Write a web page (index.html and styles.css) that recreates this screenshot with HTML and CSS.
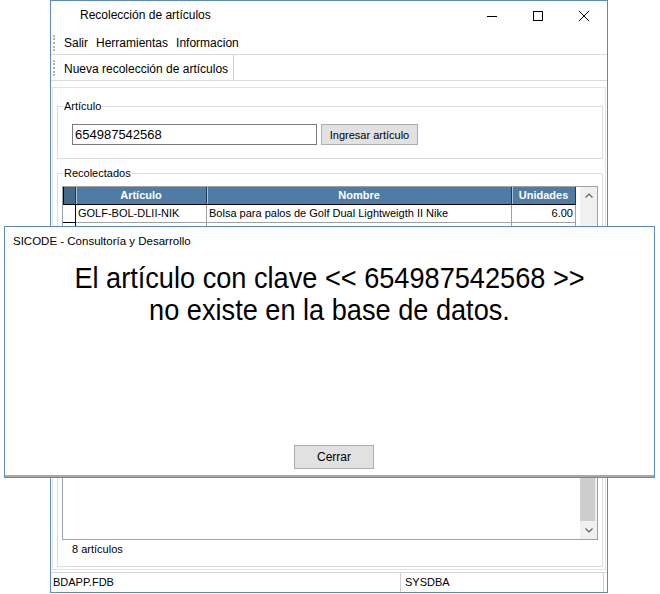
FILE: index.html
```html
<!DOCTYPE html>
<html lang="es">
<head>
    <meta charset="UTF-8">
    <title>Recolección de artículos</title>
    <link rel="stylesheet" href="styles.css">
</head>
<body>
    <div class="window">
        <div class="titlebar">
            <span class="title">Recolección de artículos</span>
            <div class="controls">
                <span class="ctl"><svg width="10" height="10" viewBox="0 0 10 10"><path d="M0 5.5h10" stroke="#000" stroke-width="1"/></svg></span>
                <span class="ctl"><svg width="10" height="10" viewBox="0 0 10 10"><rect x="0.5" y="0.5" width="9" height="9" fill="none" stroke="#000" stroke-width="1"/></svg></span>
                <span class="ctl"><svg width="10" height="10" viewBox="0 0 10 10"><path d="M0 0L10 10M10 0L0 10" stroke="#000" stroke-width="1"/></svg></span>
            </div>
        </div>

        <div class="menubar">
            <span class="grip"></span>
            <span class="menu-item">Salir</span>
            <span class="menu-item">Herramientas</span>
            <span class="menu-item">Informacion</span>
        </div>

        <div class="toolbar">
            <span class="grip"></span>
            <span class="tool-btn">Nueva recolección de artículos</span>
        </div>

        <div class="panel">
            <fieldset class="group">
                <legend>Artículo</legend>
                <div class="entry">
                    <input type="text" class="field" value="654987542568">
                    <button class="btn btn-add">Ingresar artículo</button>
                </div>
            </fieldset>

            <fieldset class="group group-list">
                <legend>Recolectados</legend>
                <div class="grid">
                    <div class="grid-body">
                        <div class="row head">
                            <div class="cell c-ind"></div>
                            <div class="cell c-art">Artículo</div>
                            <div class="cell c-nom">Nombre</div>
                            <div class="cell c-uni">Unidades</div>
                        </div>
                        <div class="row current">
                            <div class="cell c-ind"></div>
                            <div class="cell c-art">GOLF-BOL-DLII-NIK</div>
                            <div class="cell c-nom">Bolsa para palos de Golf Dual Lightweigth II Nike</div>
                            <div class="cell c-uni">6.00</div>
                        </div>
                        <div class="row"><div class="cell c-ind"></div><div class="cell c-art"></div><div class="cell c-nom"></div><div class="cell c-uni"></div></div>
                        <div class="row"><div class="cell c-ind"></div><div class="cell c-art"></div><div class="cell c-nom"></div><div class="cell c-uni"></div></div>
                        <div class="row"><div class="cell c-ind"></div><div class="cell c-art"></div><div class="cell c-nom"></div><div class="cell c-uni"></div></div>
                        <div class="row"><div class="cell c-ind"></div><div class="cell c-art"></div><div class="cell c-nom"></div><div class="cell c-uni"></div></div>
                        <div class="row"><div class="cell c-ind"></div><div class="cell c-art"></div><div class="cell c-nom"></div><div class="cell c-uni"></div></div>
                    </div>
                    <div class="vscroll">
                        <span class="sb-btn"><svg width="8" height="5" viewBox="0 0 8 5"><path d="M0.5 4.5L4 1L7.5 4.5" fill="none" stroke="#606060" stroke-width="1.2"/></svg></span>
                        <span class="sb-thumb"></span>
                        <span class="sb-btn"><svg width="8" height="5" viewBox="0 0 8 5"><path d="M0.5 0.5L4 4L7.5 0.5" fill="none" stroke="#606060" stroke-width="1.2"/></svg></span>
                    </div>
                </div>
                <div class="count">8 artículos</div>
            </fieldset>
        </div>

        <div class="statusbar">
            <span class="status-panel db">BDAPP.FDB</span>
            <span class="status-panel user">SYSDBA</span>
        </div>
    </div>

    <!-- mensaje modal encima del formulario -->
    <div class="dialog" role="dialog">
        <div class="dialog-title">SICODE - Consultoría y Desarrollo</div>
        <div class="dialog-msg">El artículo con clave &lt;&lt; 654987542568 &gt;&gt;<br>no existe en la base de datos.</div>
        <div class="dialog-actions">
            <button class="btn btn-close">Cerrar</button>
        </div>
    </div>
</body>
</html>
```

FILE: styles.css
```css
* {
    box-sizing: border-box;
}
body {
    margin: 0;
    width: 660px;
    height: 594px;
    overflow: hidden;
    position: relative;
    background-color: #ffffff;
    color: #000000;
    font-family: "Liberation Sans", Arial, sans-serif;
    font-size: 12px;
}
.window {
    margin-left: 50px;
    width: 558px;
    height: 593px;
    border: 1px solid #5d8bbd;
    display: flex;
    flex-direction: column;
}
.titlebar {
    height: 31px;
    display: flex;
    flex-shrink: 0;
}
.title {
    flex: 1;
    padding-left: 29px;
    line-height: 28px;
}
.controls {
    display: flex;
}
.ctl {
    width: 46px;
    height: 30px;
    display: flex;
    align-items: center;
    justify-content: center;
}
.menubar {
    height: 23px;
    flex-shrink: 0;
    display: flex;
    align-items: center;
    border-bottom: 1px solid #dadada;
}
.grip {
    width: 2px;
    height: 16px;
    margin: 0 5px 0 2px;
    border-left: 2px dotted #b4b4b4;
}
.menu-item {
    padding: 0 4px;
}
.toolbar {
    height: 26px;
    flex-shrink: 0;
    display: flex;
    align-items: stretch;
    border-bottom: 1px solid #dadada;
}
.toolbar .grip {
    align-self: center;
    margin-right: 3px;
}
.tool-btn {
    padding: 3px 5px 0 6px;
    display: flex;
    align-items: center;
    border-right: 1px solid #cfcfcf;
}
.panel {
    flex: 1;
    margin: 6px 1px 0;
    border: 1px solid #e3e3e3;
    padding: 12px 2px 2px 4px;
}
.group {
    margin: 0;
    padding: 0 4px;
    min-width: 0;
    border: 1px solid #dcdcdc;
}
.group legend {
    margin-left: 1px;
    padding: 0 1px;
    font-size: 11px;
    line-height: 13px;
}
.group-list {
    margin-top: 8px;
    padding-bottom: 8px;
}
.entry {
    display: flex;
    gap: 4px;
    padding: 11px 0 13px 10px;
}
.field {
    width: 245px;
    height: 21px;
    margin: 0;
    padding: 0 2px;
    border: 1px solid #7a7a7a;
    font-family: inherit;
    font-size: 13px;
    color: #000;
}
.btn {
    margin: 0;
    padding: 0;
    background-color: #e1e1e1;
    border: 1px solid #adadad;
    font-family: inherit;
    color: #000;
}
.btn-add {
    width: 97px;
    height: 21px;
    font-size: 11px;
}
.grid {
    margin-top: 6px;
    height: 354px;
    border: 1px solid #a0a0a0;
    display: flex;
}
.grid-body {
    width: 517px;
}
.row {
    display: flex;
    height: 18px;
    font-size: 11px;
    line-height: 17px;
}
.cell {
    padding: 0 2px;
    white-space: nowrap;
    overflow: hidden;
    border-right: 1px solid #a0a0a0;
    border-bottom: 1px solid #a0a0a0;
}
.c-ind {
    width: 13px;
    border-right-color: #000;
}
.c-art {
    width: 131px;
}
.c-nom {
    width: 305px;
}
.c-uni {
    width: 64px;
    text-align: right;
}
.head .cell {
    background-color: #4e7ca5;
    color: #ffffff;
    font-weight: bold;
    text-align: center;
    border-right: 1px solid #1f3a52;
    border-bottom: 1px solid #000;
    box-shadow: inset 1px 0 0 #a9c2d8;
}
.head .c-ind {
    background-color: #44698b;
    box-shadow: inset 1px 0 0 #000;
}
.current .c-ind {
    border-bottom-color: #000;
}
.vscroll {
    width: 17px;
    background-color: #f0f0f0;
    display: flex;
    flex-direction: column;
}
.sb-btn {
    height: 17px;
    flex-shrink: 0;
    display: flex;
    align-items: center;
    justify-content: center;
}
.sb-thumb {
    margin: auto 2px 1px 0;
    height: 220px;
    background-color: #cdcdcd;
}
.count {
    padding-left: 10px;
    height: 18px;
    line-height: 18px;
    font-size: 11px;
}
.statusbar {
    height: 20px;
    margin-top: 2px;
    flex-shrink: 0;
    display: flex;
    border-top: 1px solid #d7d7d7;
    font-size: 11px;
    line-height: 18px;
}
.status-panel {
    border-right: 1px solid #d0d0d0;
}
.db {
    width: 350px;
    padding-left: 2px;
}
.user {
    width: 203px;
    padding-left: 4px;
}
.dialog {
    position: absolute;
    left: 4px;
    top: 226px;
    width: 651px;
    height: 252px;
    background-color: #ffffff;
    border: 1px solid #5d8bbd;
    box-shadow: inset 0 -2px 0 #a9a9a9;
    display: flex;
    flex-direction: column;
}
.dialog-title {
    padding: 7px 0 0 8px;
    line-height: 14px;
    font-size: 11.5px;
}
.dialog-msg {
    margin-top: 14px;
    font-size: 30px;
    line-height: 32px;
    text-align: center;
    transform: scaleX(0.905);
}
.dialog-actions {
    margin-top: auto;
    padding: 0 0 8px 289px;
}
.btn-close {
    width: 80px;
    height: 24px;
    font-size: 12px;
}
```
